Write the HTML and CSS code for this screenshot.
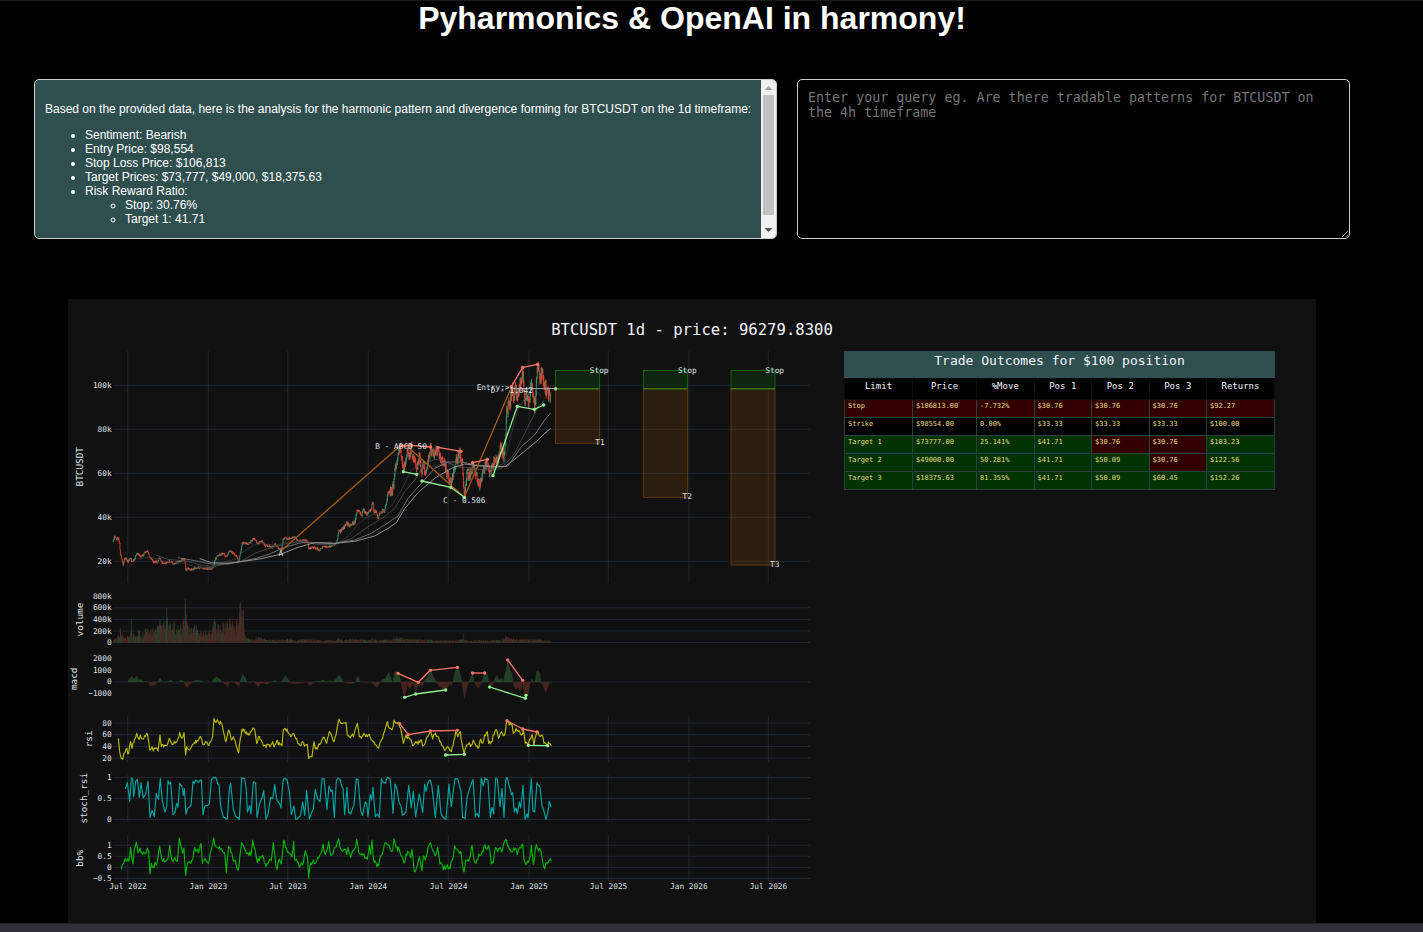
FILE: index.html
```html
<!DOCTYPE html>
<html lang="en">
<head>
<meta charset="utf-8">
<title>Pyharmonics &amp; OpenAI</title>
<link rel="stylesheet" href="styles.css">
</head>
<body>
<div class="page">
  <h1 class="title">Pyharmonics &amp; OpenAI in harmony!</h1>
  <main class="content">
    <section class="panels">
      <div class="answer">
        <div class="answer-text">
          <p>Based on the provided data, here is the analysis for the harmonic pattern and divergence forming for BTCUSDT on the 1d timeframe:</p>
          <ul>
            <li>Sentiment: Bearish</li>
            <li>Entry Price: $98,554</li>
            <li>Stop Loss Price: $106,813</li>
            <li>Target Prices: $73,777, $49,000, $18,375.63</li>
            <li>Risk Reward Ratio:
              <ul>
                <li>Stop: 30.76%</li>
                <li>Target 1: 41.71</li>
              </ul>
            </li>
          </ul>
        </div>
        <div class="scrollbar" aria-hidden="true">
          <svg class="arrow" viewBox="0 0 15 15"><path d="M3.500 10h8L7.500 6z" fill="#a3a3a3"/></svg>
          <div class="track"><div class="thumb"></div></div>
          <svg class="arrow" viewBox="0 0 15 15"><path d="M3.500 5h8L7.500 9z" fill="#505050"/></svg>
        </div>
      </div>
      <textarea class="query" aria-label="Query" placeholder="Enter your query eg. Are there tradable patterns for BTCUSDT on the 4h timeframe"></textarea>
    </section>
    <section class="chart">
      <svg class="plot" id="plot" viewBox="0 0 1600 800" role="img" aria-label="BTCUSDT 1d chart"></svg>
      <table class="outcomes">
        <caption>Trade Outcomes for $100 position</caption>
        <colgroup><col class="wide"><col class="mid"><col><col><col><col><col class="wide"></colgroup>
        <thead><tr><th>Limit</th><th>Price</th><th>%Move</th><th>Pos 1</th><th>Pos 2</th><th>Pos 3</th><th>Returns</th></tr></thead>
        <tbody>
          <tr class="loss"><td>Stop</td><td>$106813.00</td><td>-7.732%</td><td>$30.76</td><td>$30.76</td><td>$30.76</td><td>$92.27</td></tr>
          <tr><td>Strike</td><td>$98554.00</td><td>0.00%</td><td>$33.33</td><td>$33.33</td><td>$33.33</td><td>$100.00</td></tr>
          <tr class="gain"><td>Target 1</td><td>$73777.00</td><td>25.141%</td><td>$41.71</td><td class="loss">$30.76</td><td class="loss">$30.76</td><td>$103.23</td></tr>
          <tr class="gain"><td>Target 2</td><td>$49000.00</td><td>50.281%</td><td>$41.71</td><td>$50.09</td><td class="loss">$30.76</td><td>$122.56</td></tr>
          <tr class="gain"><td>Target 3</td><td>$18375.63</td><td>81.355%</td><td>$41.71</td><td>$50.09</td><td>$60.45</td><td>$152.26</td></tr>
        </tbody>
      </table>
    </section>
  </main>
  <footer class="edge"></footer>
</div>
<script src="chart.js"></script>
</body>
</html>
```
FILE: styles.css
```css
* { box-sizing: border-box; }
body {
  margin: 0;
  background: #000;
  color: #fff;
  font-family: "Liberation Sans", Arial, sans-serif;
}
.page {
  min-height: 100vh;
  display: flex;
  flex-direction: column;
  border-top: 1px solid #1c1b22;
}
.title {
  margin: 0 39px 44px 0;
  font-size: 32px;
  line-height: 34px;
  text-align: center;
}
.content { padding: 0 73px 0 34px; }
.panels {
  display: grid;
  grid-template-columns: 743fr 553fr;
  gap: 20px;
  height: 160px;
}
.answer {
  display: flex;
  min-width: 0;
  border: 1px solid #ccc;
  border-radius: 5px;
  background: #2f4f4f;
  overflow: hidden;
}
.answer-text {
  flex: 1;
  min-width: 0;
  padding: 10px 6px 10px 10px;
  overflow: hidden;
  font-size: 12px;
  line-height: 14px;
}
.answer-text p { margin: 12px 0; }
.answer-text ul { margin: 12px 0; padding-left: 40px; }
.answer-text ul ul { margin: 0; }
.scrollbar {
  width: 15px;
  display: flex;
  flex-direction: column;
  background: #f1f1f1;
}
.arrow { width: 15px; height: 15px; }
.track { flex: 1; padding: 0 2px; }
.thumb { height: 94%; background: #c1c1c1; }
.query {
  width: 100%;
  height: 100%;
  padding: 10px;
  border: 1px solid #ccc;
  border-radius: 5px;
  background: #000;
  color: #fff;
  font-family: "DejaVu Sans Mono", monospace;
}
.query::placeholder { color: #757575; }
.chart {
  display: grid;
  grid-template-columns: 776fr 431fr 41fr;
  grid-template-rows: 52px 1fr;
  margin: 60px 34px 0;
  background: #111;
  font-family: "DejaVu Sans Mono", monospace;
}
.plot { grid-area: 1 / 1 / 3 / 4; width: 100%; display: block; }
.plot text { fill: #dfe2e6; font-size: 10px; }
.plot .heading { fill: #f2f5fa; font-size: 20px; }
.plot .axis { font-size: 12px; }
.outcomes {
  grid-area: 2 / 2;
  align-self: start;
  width: 100%;
  table-layout: fixed;
  border-collapse: collapse;
}
.outcomes caption {
  height: 27px;
  background: #2f4f4f;
  color: #f2f5fa;
  font-size: 13px;
  line-height: 20px;
}
.outcomes .wide { width: 68px; }
.outcomes .mid { width: 64px; }
.outcomes th, .outcomes td {
  border: 1px solid #24423f;
  overflow: hidden;
  white-space: nowrap;
}
.outcomes th {
  height: 21px;
  padding: 0 0 7px;
  border-color: #0b0e0f;
  background: #000;
  color: #f2f5fa;
  font-size: 9px;
  line-height: 12px;
  font-weight: 400;
}
.outcomes td {
  height: 18px;
  padding: 0 3px 6px;
  color: #e2d982;
  font-size: 7px;
  line-height: 10px;
}
.outcomes tr { background: #000; }
.outcomes tr.gain { background: #030; }
.outcomes .loss { background: #300; }
.edge {
  flex: 1;
  min-height: 9px;
  border-top: 1px solid #222126;
  background: #312f3a;
}
```
FILE: chart.js
```js
const NS = "http://www.w3.org/2000/svg";
const plot = document.getElementById("plot");
const K = 0.78, OX = 68, OY = 299;

function el(tag, attrs, parent) {
  const e = document.createElementNS(NS, tag);
  for (const k in attrs) e.setAttribute(k, attrs[k]);
  (parent || plot).appendChild(e);
  return e;
}
const g = el("g", { transform: `scale(${1 / K}) translate(${-OX} ${-OY})`, fill: "none" });

let seed = 7;
function rnd() { seed = (seed * 16807) % 2147483647; return seed / 2147483647; }

function label(text, x, y, anchor, cls, rotate) {
  const X = Math.round((x - OX) / K), Y = Math.round((y - OY) / K);
  const a = { x: X, y: Y, "text-anchor": anchor || "middle" };
  if (cls) a.class = cls;
  if (rotate) a.transform = `rotate(-90 ${X} ${Y})`;
  el("text", a).textContent = text;
}
/* Point lists are stored at three units per plot pixel, from a panel origin. */
function points(str, ox, oy) {
  return str.trim().split(/\s+/).map(p => {
    const [x, y] = p.split(",").map(Number);
    return [ox + x / 3, oy + y / 3];
  });
}
/* Joins two lists, dropping the part of the first that the second covers. */
function join(a, b) {
  return a.filter(p => p[0] < b[0][0]).concat(b);
}
function line(pts, stroke, width, extra) {
  el("polyline", Object.assign({ points: pts.map(p => p[0].toFixed(2) + "," + p[1].toFixed(2)).join(" "),
    stroke, "stroke-width": width, "stroke-linejoin": "round" }, extra), g);
}
function at(pts, x) {
  let i = 1;
  while (i < pts.length - 1 && pts[i][0] < x) i++;
  const [a, b] = [pts[i - 1], pts[i]];
  return a[1] + (b[1] - a[1]) * (x - a[0]) / (b[0] - a[0]);
}

/* Grid */
const months = [[127.7, "Jul 2022"], [208.3, "Jan 2023"], [287.7, "Jul 2023"], [368.3, "Jan 2024"],
  [448.3, "Jul 2024"], [529, "Jan 2025"], [608.3, "Jul 2025"], [689, "Jan 2026"], [768.3, "Jul 2026"]];
for (const [x] of months)
  for (const [a, b] of [[351, 583], [715.5, 762], [775, 822], [835, 881]])
    el("path", { d: `M${x} ${a}V${b}`, stroke: "#222933", "stroke-width": 0.9 }, g);
const ticks = [[385.3, "100k"], [429.3, "80k"], [473.3, "60k"], [517.3, "40k"], [561.3, "20k"],
  [596, "800k", 1], [607.7, "600k"], [619.5, "400k"], [631, "200k"], [642.5, "0"],
  [658.5, "2000", 1], [670, "1000", 1], [682, "0"], [693.7, "−1000", 1],
  [723, "80"], [734.7, "60"], [746.4, "40"], [758, "20"],
  [777.5, "1"], [798.5, "0.5"], [819.5, "0"],
  [845.3, "1"], [856.3, "0.5"], [867.5, "0"], [878.5, "−0.5"]];
for (const [y, , bare] of ticks)
  if (!bare) el("path", { d: `M113 ${y}H810`, stroke: "#222933", "stroke-width": 0.9 }, g);

/* Candles */
const price = join(points("136,606 140,588 146,598 150,592 154,606 157,640 162,662 165,674 170,655 175,658 180,665 188,655 194,668 200,655 206,640 214,645 220,652 228,640 238,634 244,650 250,655 256,665 262,665 268,668 274,650 282,668 290,670 300,664 310,666 318,672 330,668 340,660 350,657 353,690 360,685 368,690 380,684 395,682 410,686 430,686 437,678 440,662 446,650 455,643 465,640 475,652 485,632 495,640 505,648 513,665 517,640 522,610 530,608 540,612 548,606 556,596 562,597 568,612 580,602 590,616 600,618 612,622 622,614 630,622 640,630 645,600 650,592 660,596 670,594 680,590 688,600 700,602 718,602 722,625 735,622 745,626 755,630 765,620 778,622 790,617 802,613 808,598 812,570 820,572 830,560 835,548 845,556 855,550 862,545 866,510 872,508 880,524 888,510 896,520 902,510 908,512 915,485 918,518 925,515 930,535 938,516 948,514 955,490 960,460", 68, 340),
  points("146,452 155,455 160,445 164,400 170,370 174,340 180,322 186,350 190,385 196,370 202,335 208,345 214,325 220,360 226,370 230,385 238,350 244,400 250,375 258,390 266,360 272,325 280,345 292,330 300,350 310,370 320,395 330,425 335,430 342,385 350,360 360,340 366,370 370,420 374,460 380,400 390,405 398,380 404,395 412,425 418,440 425,410 432,390 440,370 448,395 455,390 465,360 475,355 482,325 490,345 494,320 497,280 500,220 506,195 512,180 516,145 520,185 526,140 532,175 540,130 548,100 552,160 560,180 568,185 574,130 580,175 584,200 590,110 594,85 600,110 606,100 612,145 620,150 626,165 632,170", 340, 340));
let up = "", down = "", prev = price[0][1];
for (let x = price[0][0]; x < 550.6; x += 0.442) {
  const amp = x < 340 ? 2 : x < 390 ? 3.5 : x < 500 ? 9 : 12;
  const y = at(price, x) + (rnd() - 0.5) * amp;
  const hi = Math.min(y, prev) - rnd() * amp * 0.4, lo = Math.max(y, prev) + rnd() * amp * 0.4;
  const d = `M${x.toFixed(2)} ${hi.toFixed(2)}V${lo.toFixed(2)}`;
  if (y < prev) up += d; else down += d;
  prev = y;
}
el("path", { d: up, stroke: "#3d9970", "stroke-width": 0.9 }, g);
el("path", { d: down, stroke: "#ff4136", "stroke-width": 0.8 }, g);

/* Moving averages */
line(points("210,655 250,652 290,664 340,668 390,682 430,684 460,668 500,658 530,632 570,608 620,616 660,606 700,602 750,614 800,614 840,590 870,552 900,530 940,516 970,498 1000,450 1030,390 1060,370 1100,380 1130,368 1160,375 1200,395 1240,375 1270,388 1310,368 1330,280 1350,210 1376,165 1400,145 1420,170", 68, 340), "#3b3b3b", 0.8);
line(points("265,646 300,658 360,664 400,676 440,680 480,668 520,664 560,640 600,626 650,612 700,604 750,612 800,612 850,596 900,560 950,530 980,505 1010,455 1040,420 1070,372 1100,358 1130,362 1160,376 1200,384 1250,390 1300,386 1340,340 1370,280 1390,240 1410,200 1430,180", 68, 340), "#4a4a4a", 0.9);
line(points("330,653 380,662 430,672 480,672 520,664 560,656 600,644 650,622 700,608 750,608 800,610 860,600 910,580 950,555 990,528 1020,475 1060,430 1100,385 1140,366 1180,366 1230,376 1280,382 1320,378 1360,320 1400,285 1430,240 1448,219", 68, 340), "#777", 0.9);
line(points("395,656 430,668 480,670 520,665 580,656 640,642 690,622 740,608 800,610 860,604 920,588 960,565 985,548 1010,506 1050,458 1100,415 1150,385 1190,372 1240,378 1310,380 1340,358 1380,325 1410,300 1430,280 1448,265", 68, 340), "#909090", 1);

/* Trade boxes */
for (const [x, bottom] of [[555.6, 443.3], [643.4, 497.3], [731, 565]]) {
  const w = 44;
  el("rect", { x, y: 370.4, width: w, height: 18.4, fill: "#0f280f", stroke: "#0a6a12", "stroke-width": 0.9, "fill-opacity": 0.9 }, g);
  el("rect", { x, y: 388.8, width: w, height: bottom - 388.8, fill: "#ff8c00", "fill-opacity": 0.11, stroke: "#663b0d", "stroke-width": 0.9 }, g);
  el("path", { d: `M${x} 388.8h${w}`, stroke: "#3c8a05", "stroke-width": 1.1 }, g);
}
/* Harmonic pattern */
line([[281, 551], [401, 445]], "#a85a08", 1.3);
line(points("183,315 205,322 373,472 513,145", 340, 340), "#a85a08", 1.3);
line([[511, 388.6], [555.6, 388.6]], "#aaa", 1);

/* Divergences */
function marks(str, oy, color) {
  const p = points(str, 340, oy);
  line(p, color, 1.3);
  for (const [cx, cy] of p) el("circle", { cx, cy, r: 1.7, fill: color }, g);
}
const RED = "#ff7466", GREEN = "#90ee90";
for (const s of ["182,318 214,316 272,321", "294,322 363,334", "398,368 442,358", "514,140 548,82 593,73"]) marks(s, 340, RED);
for (const s of ["190,395 230,403", "246,423 332,442 373,472", "459,407 532,199 583,208 611,195"]) marks(s, 340, GREEN);
el("circle", { cx: 555.6, cy: 388.8, r: 1.7, fill: "#a7d98c" }, g);

/* Volume */
const vol = points("136,10 150,22 157,46 165,22 185,20 190,60 196,30 206,46 220,34 240,48 258,46 270,74 285,70 296,96 304,60 318,66 330,58 345,70 352,130 357,66 366,48 380,54 400,42 420,34 430,40 437,80 445,62 470,60 485,80 500,62 510,76 515,120 520,124 526,110 530,24 540,14 560,12 575,20 600,10 640,9 650,15 680,9 720,14 760,8 800,10 812,18 825,9 860,12 900,8 916,16 930,8 970,12 984,20 1000,16 1020,12 1060,12 1100,8 1150,9 1185,12 1200,7 1300,9 1312,20 1350,12 1400,14 1448,6", 68, 0);
const bars = ["", ""];
for (let x = 113.5; x < 550.6; x += 0.5)
  bars[rnd() < (x < 225 ? 0.5 : 0.4) ? 0 : 1] += `M${x.toFixed(2)} 642.7v${(-at(vol, x) * (0.35 + 0.65 * rnd())).toFixed(2)}`;
for (const [x, h, c] of [[157, 44, 0], [190, 70, 0], [296, 105, 0], [352, 132, 0], [515, 112, 1], [517, 122, 1], [1187, 27, 1]])
  bars[c] += `M${68 + x / 3} 642.7v${-h / 3}`;
el("path", { d: bars[0], stroke: "#2b4a2f", "stroke-width": 0.7 }, g);
el("path", { d: bars[1], stroke: "#532a25", "stroke-width": 0.7 }, g);

/* MACD histogram */
const hist = join(points("178,0 184,-9 190,-17 198,-10 206,-18 214,-6 220,-8 228,0 236,-3 242,0 246,12 258,10 266,3 272,-6 277,-13 283,-2 290,4 296,-1 308,-6 316,0 332,0 336,-6 348,-3 352,12 358,17 368,4 376,-3 386,-6 400,-4 406,0 432,0 438,-12 446,-16 456,-9 462,0 470,6 480,12 486,2 492,-3 498,2 506,8 513,14 517,-4 524,-24 532,-12 538,0 548,4 556,-3 562,4 570,14 578,4 586,3 596,8 606,2 620,-5 630,0 640,1 646,-10 652,-19 662,-6 668,3 680,5 700,4 718,0 724,12 732,6 740,-2 752,-2 766,-7 774,0 784,-5 796,-2 804,-9 814,-23 824,-8 834,-2 842,7 852,6 862,4 868,-18 874,-14 880,4 890,8 900,8", 68, 0),
  points("0,-18 5,-10 12,0 30,6 40,4 46,2 50,-12 54,-18 60,-3 66,1 80,2 90,0 98,3 104,12 112,16 120,2 128,-8 136,-10 146,-30 154,-8 158,0 164,-30 170,-32 178,-20 184,6 190,36 194,44 202,8 208,20 214,14 220,2 228,32 234,4 240,0 246,18 254,-6 262,-14 272,-36 280,-16 288,-3 296,10 308,22 320,22 328,6 334,12 340,-8 348,-42 352,-46 358,-34 364,-10 368,20 373,50 379,24 386,0 392,-14 398,-28 402,-2 408,12 416,18 424,4 432,-22 440,-26 446,-8 450,8 458,10 464,-10 470,-20 478,-6 484,-12 490,-2 498,-36 503,-64 510,-36 516,-26 520,8 528,22 536,18 542,28 547,4 552,30 558,46 564,40 570,10 575,-12 581,4 586,-6 590,-34 595,-34 600,-22 604,3 610,12 616,34 622,20 628,4 632,2", 340, 0));
const hb = ["", ""];
for (let x = 127.5; x < 550.5; x += 0.5) {
  const v = at(hist, x);
  hb[v < 0 ? 0 : 1] += `M${x} 682v${v.toFixed(2)}`;
}
el("path", { d: hb[0], stroke: "#2a4a2e", "stroke-width": 0.6 }, g);
el("path", { d: hb[1], stroke: "#552822", "stroke-width": 0.6 }, g);
for (const s of ["174,265 235,292 271,256 352,247", "398,264 434,264", "503,225 548,286"]) marks(s, 585, RED);
for (const s of ["194,337 227,327 317,315", "449,306 556,340 558,331"]) marks(s, 585, GREEN);

/* Oscillators */
function rough(pts, amp, stroke) {
  const out = [];
  for (let i = 0; i < pts.length - 1; i++) {
    out.push(pts[i]);
    const [a, b] = [pts[i], pts[i + 1]];
    const n = Math.floor((b[0] - a[0]) / 0.8);
    for (let j = 1; j < n; j++) {
      const t = j / n;
      out.push([a[0] + (b[0] - a[0]) * t, a[1] + (b[1] - a[1]) * t + (rnd() - 0.5) * amp]);
    }
  }
  out.push(pts[pts.length - 1]);
  line(out, stroke, 1.15);
}
rough(join(points("151,460 155,500 160,520 164,523 168,505 174,492 182,505 188,470 192,490 200,462 206,445 212,462 217,450 224,462 230,452 238,446 242,470 245,495 252,485 256,498 264,488 270,498 276,450 280,485 290,480 296,482 304,460 312,478 324,472 330,460 335,442 342,460 348,443 353,510 356,485 362,494 370,486 378,474 390,468 398,455 404,478 412,470 420,480 428,470 434,455 438,400 444,412 448,404 452,412 460,415 466,440 474,470 482,435 486,445 490,465 496,455 504,480 512,503 517,460 522,432 532,445 542,450 552,435 560,434 566,475 574,455 584,475 594,488 600,478 606,486 614,470 618,486 626,468 636,480 642,482 646,435 652,430 660,442 668,455 676,445 684,462 694,478 704,470 712,480 718,478 722,520 732,515 738,470 742,492 750,486 760,470 770,460 776,475 784,440 792,455 798,470 804,450 808,425 813,402 820,422", 68, 585),
  points("0,410 6,415 12,414 18,412 22,450 28,455 34,452 40,455 44,440 52,415 58,455 64,460 72,445 82,455 88,448 94,465 102,470 108,480 116,490 122,470 128,460 136,430 142,410 150,430 156,435 162,405 168,415 176,412 184,440 190,475 196,455 204,455 212,462 218,482 226,470 234,478 242,465 250,482 258,465 266,450 271,440 278,462 284,448 294,455 302,470 310,485 317,495 326,488 334,500 342,465 347,440 354,455 361,440 366,475 372,505 378,485 386,475 394,480 400,465 406,478 414,490 422,462 428,475 434,450 442,440 446,475 454,470 462,450 470,435 476,460 484,440 490,452 496,440 500,408 508,420 516,418 520,445 528,430 536,440 544,450 550,435 556,475 564,480 572,462 576,448 582,480 588,450 594,440 600,455 606,450 612,475 620,480 628,476 634,482", 340, 585)), 4.5, "#b9b900");
for (const s of ["179,416 205,449 271,438 352,436", "501,407 548,432 591,441"]) marks(s, 585, RED);
for (const s of ["317,510 373,508", "565,481 623,482"]) marks(s, 585, GREEN);

rough(join(points("172,86 178,68 185,124 190,54 194,56 197,110 203,64 208,58 214,112 219,68 226,114 233,102 240,64 246,172 252,152 259,170 265,100 271,118 277,56 283,122 291,156 296,140 300,62 304,72 308,66 315,164 321,158 326,130 330,142 335,70 342,78 346,106 349,86 354,162 360,144 369,136 375,64 379,70 383,60 390,66 400,60 405,164 411,138 418,136 424,132 430,58 436,52 444,54 449,72 453,72 458,138 466,172 478,176 484,88 488,70 496,148 504,170 514,178 521,56 530,56 535,88 538,156 545,136 549,162 556,66 563,70 567,172 575,130 583,112 587,92 594,178 600,164 608,112 614,116 620,74 627,122 634,130 639,144 645,62 650,54 657,58 664,94 670,164 678,138 683,178 697,168 704,126 710,166 716,92 724,176 736,146 742,88 748,116 756,126 762,56 768,56 777,148 783,78 789,94 793,90 799,172 805,62 811,54", 68, 760),
  points("0,58 6,80 9,84 14,164 21,82 26,158 32,162 42,134 49,56 54,58 62,152 68,166 76,126 80,130 84,170 91,104 95,120 99,82 106,170 112,162 118,172 124,56 129,66 136,70 142,52 150,56 154,92 159,160 165,72 172,92 178,130 183,136 187,166 198,156 206,76 214,144 220,94 227,170 238,102 248,158 254,72 258,94 264,68 271,60 276,80 286,172 295,76 303,160 310,172 318,178 327,72 334,140 345,56 354,58 363,94 368,172 375,176 381,112 388,88 399,58 406,170 411,160 417,172 424,54 430,78 435,54 444,62 451,172 456,142 461,162 467,54 472,58 480,140 486,86 492,172 497,60 501,52 511,88 514,104 518,98 523,156 528,144 532,160 538,126 542,144 549,76 555,178 561,162 564,174 574,56 579,154 584,156 591,68 600,82 606,136 611,150 618,178 623,160 628,124 633,142", 340, 760)), 1.5, "#00a5a5");

rough(join(points("160,328 166,312 174,300 182,304 188,262 195,312 199,268 205,246 210,278 216,264 224,284 230,280 238,264 242,276 246,342 250,310 256,318 268,305 275,258 282,300 290,305 300,296 305,256 312,300 320,292 328,304 334,234 340,262 344,280 348,264 353,346 358,312 364,306 374,300 380,262 386,272 394,270 399,250 403,310 408,302 418,306 424,298 430,268 437,234 444,260 452,266 462,270 470,278 475,338 482,260 486,262 494,294 502,300 511,330 516,284 521,248 530,270 540,278 548,286 554,240 562,274 568,308 576,290 584,286 594,320 602,306 610,302 616,248 622,300 627,328 632,300 640,312 647,240 655,264 664,280 672,290 677,244 680,300 688,306 694,322 700,308 706,308 712,272 718,288 722,354 728,308 736,300 744,306 752,294 758,282 765,252 772,284 778,268 782,244 788,286 794,284 802,262 808,248 812,236", 68, 760),
  points("0,262 8,274 14,268 20,284 24,262 32,292 38,272 44,268 50,238 56,276 64,284 72,282 82,298 88,256 92,284 96,240 100,296 108,308 116,318 124,284 130,270 136,248 142,254 150,266 158,272 162,236 168,262 178,270 184,288 192,310 198,282 206,278 212,294 216,268 222,330 230,322 238,290 246,332 250,288 256,300 264,262 271,248 278,272 288,284 293,262 300,312 308,318 316,328 322,314 330,326 337,300 344,258 352,268 362,274 367,312 372,336 377,300 386,304 396,256 402,300 408,310 416,282 424,284 432,258 440,268 448,264 454,312 460,308 467,262 476,268 486,276 494,244 500,242 508,268 518,276 526,264 532,284 540,262 548,252 552,300 560,312 568,300 574,256 580,314 589,254 596,272 604,278 608,306 614,326 620,308 628,300 634,302", 340, 760)), 6, "#00b400");

/* Labels */
for (const [y, t] of ticks) label(t, 112, y + 2.7, "end");
for (const [x, t] of months) label(t, x, 889.5);
label("BTCUSDT 1d - price: 96279.8300", 692, 335, "middle", "heading");
for (const [t, x, y] of [["BTCUSDT", 83, 467], ["volume", 83, 619.5], ["macd", 77.5, 679], ["rsi", 92, 739], ["stoch_rsi", 87, 798.5], ["bb%", 82.5, 858]])
  label(t, x, y, "middle", "axis", true);
for (const [t, x, y] of [["A", 281, 556.5], ["B - ABCD 50", 401, 449], ["C - 0.506", 464, 503], ["D - 1.042", 511.5, 392.5], ["Entry:>", 493, 390.5],
  ["Stop", 599.5, 373], ["Stop", 687, 373], ["Stop", 775, 373], ["T1", 600, 445], ["T2", 687.5, 499.5], ["T3", 775, 566.5]])
  label(t, x, y);
```
